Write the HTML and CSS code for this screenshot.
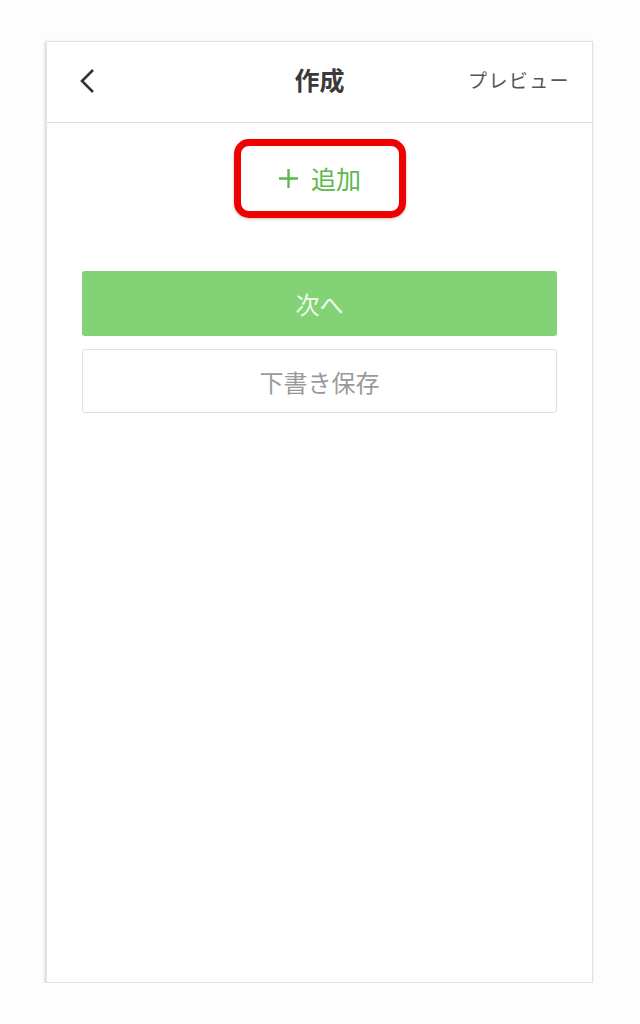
FILE: index.html
```html
<!DOCTYPE html>
<html lang="ja">
<head>
  <meta charset="UTF-8">
  <meta name="viewport" content="width=device-width, initial-scale=1.0">
  <title>作成</title>
  <link rel="stylesheet" href="styles.css">
</head>
<body>
  <div class="phone">
    <header class="topbar">
      <span class="back">
        <svg width="18" height="26" viewBox="0 0 18 26"><path d="M15 2 L4 13 L15 24" fill="none" stroke="#333" stroke-width="2.6"/></svg>
      </span>
      <h1>作成</h1>
      <span class="preview">プレビュー</span>
    </header>

    <div class="content">
      <div class="add-wrap">
        <div class="add-box">
          <span class="plus">
            <svg width="21" height="21" viewBox="0 0 21 21"><path d="M10.5 1 V20 M1 10.5 H20" stroke="#5cb84e" stroke-width="2.4"/></svg>
          </span>
          <span>追加</span>
        </div>
      </div>

      <div class="btn next">次へ</div>
      <div class="btn draft">下書き保存</div>
    </div>
  </div>
</body>
</html>
```

FILE: styles.css
```css
body {
  margin: 0;
  background: #fdfdfd;
  font-family: "Noto Sans CJK JP", "Noto Sans", sans-serif;
  color: #333;
}
.phone {
  margin: 41px 0 0 46px;
  width: 545px;
  height: 940px;
  background: #fff;
  border: 1px solid #e2e2e2;
  box-shadow: -1px 1px 3px rgba(0,0,0,0.18);
}
.topbar {
  box-sizing: border-box;
  height: 81px;
  padding-bottom: 5px;
  border-bottom: 1px solid #dedede;
  display: grid;
  grid-template-columns: 1fr auto 1fr;
  align-items: center;
  line-height: 1;
}
.back {
  padding-left: 31px;
  padding-top: 3px;
  display: flex;
  align-items: center;
}
.topbar h1 {
  margin: 0;
  font-size: 25px;
  font-weight: 700;
  color: #3a3a3a;
}
.preview {
  justify-self: end;
  padding-right: 22px;
  font-size: 19px;
  color: #555;
  letter-spacing: 1.4px;
}
.content {
  padding: 0 35px;
}
.add-wrap {
  display: flex;
  justify-content: center;
  padding-top: 16px;
}
.add-box {
  box-sizing: border-box;
  width: 172px;
  height: 79px;
  border: 7px solid #f20000;
  border-radius: 15px;
  box-shadow: 0 1px 3px rgba(0,0,0,0.25);
  display: flex;
  align-items: center;
  justify-content: center;
  gap: 12px;
  color: #5cb84e;
  font-size: 25px;
  line-height: 1;
}
.plus {
  display: flex;
}
.btn {
  box-sizing: border-box;
  height: 65px;
  border-radius: 3px;
  display: flex;
  align-items: center;
  justify-content: center;
  font-size: 24px;
}
.next {
  margin-top: 53px;
  background: #84d276;
  color: #eefbea;
}
.draft {
  margin-top: 13px;
  height: 64px;
  border: 1px solid #e0e0e0;
  color: #9a9a9a;
  background: #fff;
}
```
